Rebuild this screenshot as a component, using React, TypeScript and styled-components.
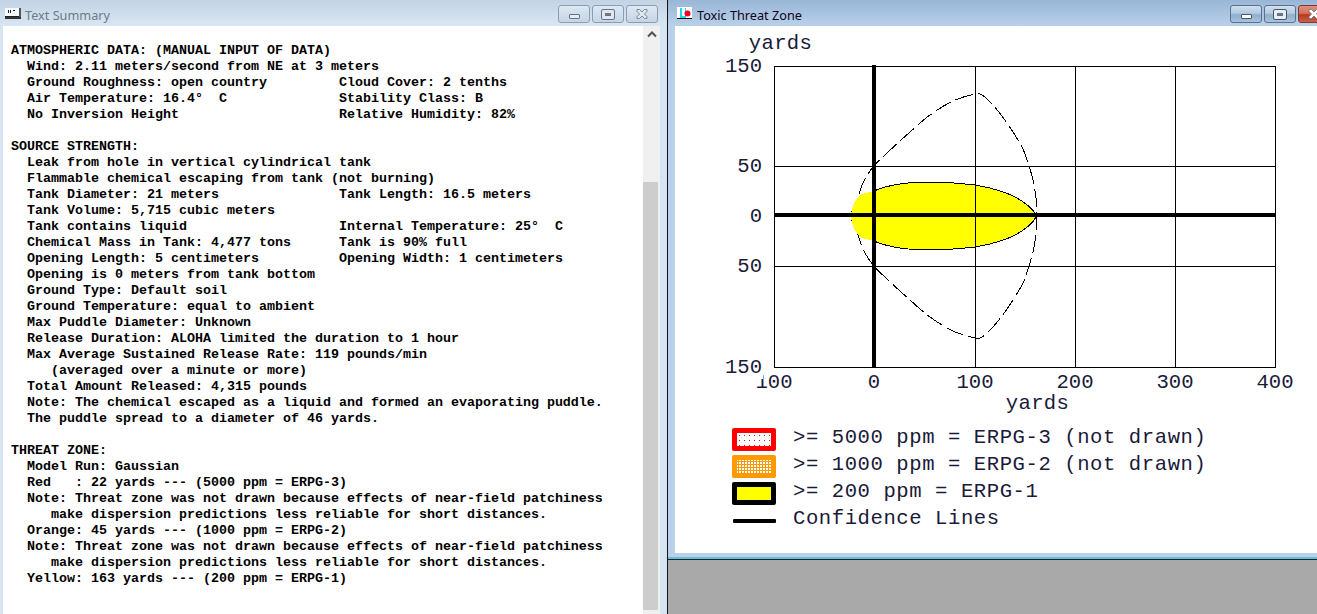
import React from "react";
import styled, { createGlobalStyle } from "styled-components";

const Global = createGlobalStyle`
  html, body { margin: 0; padding: 0; background: #a9a9a9; overflow: hidden; }
  #root { width: 1317px; height: 614px; }
`;

const Desktop = styled.div`
  display: grid;
  grid-template-columns: 668px 649px;
  width: 1317px;
  height: 614px;
  overflow: hidden;
`;

const LeftWindow = styled.section`
  display: flex;
  flex-direction: column;
  height: 614px;
  box-sizing: border-box;
  background: #d7e4f2;
  border-right: 1px solid #111;
  padding: 0 7px 0 3px;
`;

const RightColumn = styled.div`
  display: flex;
  flex-direction: column;
  height: 614px;
  background: #a9a9a9;
`;

const RightWindow = styled.section`
  display: flex;
  flex-direction: column;
  box-sizing: border-box;
  height: 560px;
  background: #b9d1ea;
  border-bottom: 1px solid #222;
  box-shadow: inset 0 -2px 0 #5fc0d8;
  padding: 0 0 6px 7px;
`;

const TitleBar = styled.header<{ $active?: boolean }>`
  display: flex;
  align-items: flex-start;
  flex: none;
  height: 26px;
  margin-left: ${(p) => (p.$active ? "-1px" : "2px")};
  margin-right: ${(p) => (p.$active ? "0" : "-5px")};
  font: 12.7px "Noto Sans", "Open Sans", sans-serif;
  color: ${(p) => (p.$active ? "#10001a" : "#6f7b88")};
`;

const LeftTitleFill = styled.div`
  margin: 0 -7px 0 -3px;
  background: linear-gradient(#c3d3e4, #d9e6f3);
`;

const RightTitleFill = styled.div`
  margin: 0 0 0 -7px;
  padding-left: 7px;
  background: linear-gradient(#98b6d6, #b9d1ea);
`;

const IconSlot = styled.span`
  display: block;
  width: 16px;
  height: 16px;
  margin: 6px 4px 0 3px;
`;

const TitleText = styled.span`
  flex: 1;
  margin-top: 6px;
  line-height: 18px;
  white-space: nowrap;
`;

const Buttons = styled.div<{ $active?: boolean }>`
  display: flex;
  gap: 2px;
  margin-top: 5px;
  margin-right: ${(p) => (p.$active ? "-13px" : "14px")};
  width: 100px;
  flex: none;
`;

const CaptionButton = styled.button<{ $active?: boolean; $close?: boolean }>`
  display: flex;
  align-items: center;
  justify-content: center;
  width: 32px;
  height: 18px;
  padding: 0;
  border: 1px solid ${(p) => (p.$close && p.$active ? "#7d3a30" : p.$active ? "#5d7088" : "#8b9db2")};
  border-radius: 3px;
  background: ${(p) =>
    p.$close && p.$active
      ? "linear-gradient(#e0907f 0%, #d6705c 45%, #b8391f 55%, #c9604a 100%)"
      : p.$active
      ? "linear-gradient(#cfdfee 0%, #b4cbe2 45%, #8fafcd 55%, #a8c3dd 100%)"
      : "linear-gradient(#dce8f3, #c4d5e6)"};
  flex: none;
`;

const MinGlyph = styled.span<{ $active?: boolean }>`
  display: block;
  width: 9px;
  height: 3px;
  margin-top: 4px;
  border: 1px solid ${(p) => (p.$active ? "#4a5568" : "#6b7480")};
  border-radius: 1px;
  background: ${(p) => (p.$active ? "#fff" : "#e3ebf3")};
`;

const MaxGlyph = styled.span<{ $active?: boolean }>`
  display: block;
  width: 6px;
  height: 3px;
  border: 3px solid ${(p) => (p.$active ? "#e8eef5" : "#dfe8f1")};
  outline: 1px solid ${(p) => (p.$active ? "#4a5568" : "#6b7480")};
  background: #6b7480;
  border-radius: 1px;
`;

const LeftBody = styled.div`
  display: flex;
  flex: 1;
  min-height: 0;
  background: #fff;
`;

const Report = styled.pre`
  flex: 1;
  margin: 0;
  padding: 17px 0 0 8px;
  font: bold 13.33px/16px "Liberation Mono", monospace;
  color: #000;
  overflow: hidden;
`;

const Scrollbar = styled.div`
  display: flex;
  flex-direction: column;
  flex: none;
  width: 17px;
  background: #f0f0f0;
`;

const ScrollUp = styled.div`
  display: flex;
  justify-content: center;
  align-items: center;
  height: 17px;
`;

const ScrollGap = styled.div`
  height: 139px;
`;

const ScrollThumb = styled.div`
  height: 428px;
  width: 15px;
  background: #cdcdcd;
`;

const ChartPane = styled.div`
  display: flex;
  flex-direction: column;
  flex: 1;
  min-height: 0;
  background: #fff;
`;

const Chart = styled.svg`
  display: block;
  flex: none;
`;

const Legend = styled.ul`
  display: flex;
  flex-direction: column;
  gap: 4px;
  list-style: none;
  margin: 5px 0 0;
  padding: 0 0 0 57px;
`;

const LegendRow = styled.li`
  display: flex;
  align-items: center;
  gap: 17px;
  height: 23px;
  font: 20.6px/23px "Liberation Mono", monospace;
  letter-spacing: 0.56px;
  color: #1a1a3a;
  white-space: pre;
`;

const LegendLabel = styled.span`
  margin-bottom: 5px;
`;

const Swatch = styled.span<{ $border: string; $fill: string; $dots?: string; $dense?: boolean }>`
  display: block;
  box-sizing: border-box;
  width: 44px;
  height: 23px;
  border: 5px solid ${(p) => p.$border};
  border-radius: 2px;
  background-color: ${(p) => p.$fill};
  ${(p) =>
    p.$dots
      ? p.$dense
        ? `background-image: radial-gradient(circle at 1.5px 1.5px, ${p.$dots} 1.1px, transparent 1.2px); background-size: 3px 3px;`
        : `background-image: linear-gradient(${p.$dots}, ${p.$dots}); background-size: 1px 1px; background-image: radial-gradient(circle at 2.5px 2.5px, ${p.$dots} 0.7px, transparent 0.8px); background-size: 5px 5px;`
      : ""}
`;

const LineSwatch = styled.span`
  display: block;
  width: 43px;
  height: 4px;
  margin-left: 1px;
  background: #000;
  border-radius: 1px;
`;

const REPORT = `ATMOSPHERIC DATA: (MANUAL INPUT OF DATA)
  Wind: 2.11 meters/second from NE at 3 meters
  Ground Roughness: open country         Cloud Cover: 2 tenths
  Air Temperature: 16.4°  C              Stability Class: B
  No Inversion Height                    Relative Humidity: 82%

SOURCE STRENGTH:
  Leak from hole in vertical cylindrical tank
  Flammable chemical escaping from tank (not burning)
  Tank Diameter: 21 meters               Tank Length: 16.5 meters
  Tank Volume: 5,715 cubic meters
  Tank contains liquid                   Internal Temperature: 25°  C
  Chemical Mass in Tank: 4,477 tons      Tank is 90% full
  Opening Length: 5 centimeters          Opening Width: 1 centimeters
  Opening is 0 meters from tank bottom
  Ground Type: Default soil
  Ground Temperature: equal to ambient
  Max Puddle Diameter: Unknown
  Release Duration: ALOHA limited the duration to 1 hour
  Max Average Sustained Release Rate: 119 pounds/min
     (averaged over a minute or more)
  Total Amount Released: 4,315 pounds
  Note: The chemical escaped as a liquid and formed an evaporating puddle.
  The puddle spread to a diameter of 46 yards.

THREAT ZONE:
  Model Run: Gaussian
  Red   : 22 yards --- (5000 ppm = ERPG-3)
  Note: Threat zone was not drawn because effects of near-field patchiness
     make dispersion predictions less reliable for short distances.
  Orange: 45 yards --- (1000 ppm = ERPG-2)
  Note: Threat zone was not drawn because effects of near-field patchiness
     make dispersion predictions less reliable for short distances.
  Yellow: 163 yards --- (200 ppm = ERPG-1)`;

// Chart coordinates are given in page pixels; the svg is offset by the pane origin (675, 26).
const OX = 675;
const OY = 26;
const px = (x: number) => x - OX;
const py = (y: number) => y - OY;

const upper: [number, number][] = [
  [851, 216], [853, 208], [857, 200], [863, 183], [873, 167], [887, 153], [910, 132], [930, 115],
  [953, 101], [975, 94], [982, 95], [993, 105], [1007, 123], [1022, 147], [1028, 163], [1033, 180], [1036, 198], [1037, 216],
];
const lower = upper.map(([x, y]) => [x, 432 - y] as [number, number]).reverse();

function smooth(points: [number, number][]): string {
  let d = `M${px(points[0][0])} ${py(points[0][1])}`;
  for (let i = 0; i < points.length - 1; i++) {
    const p0 = points[Math.max(i - 1, 0)];
    const p1 = points[i];
    const p2 = points[i + 1];
    const p3 = points[Math.min(i + 2, points.length - 1)];
    const c1x = p1[0] + (p2[0] - p0[0]) / 6;
    const c1y = p1[1] + (p2[1] - p0[1]) / 6;
    const c2x = p2[0] - (p3[0] - p1[0]) / 6;
    const c2y = p2[1] - (p3[1] - p1[1]) / 6;
    d += ` C${px(c1x)} ${py(c1y)} ${px(c2x)} ${py(c2y)} ${px(p2[0])} ${py(p2[1])}`;
  }
  return d;
}

const confidence = smooth([...upper, ...lower.slice(1)]);

const plumeTop = `M${px(874)} ${py(191)} C${px(890)} ${py(184)} ${px(910)} ${py(182)} ${px(930)} ${py(182)} C${px(950)} ${py(182)} ${px(965)} ${py(184)} ${px(975)} ${py(185)} C${px(1000)} ${py(189)} ${px(1025)} ${py(197)} ${px(1037)} ${py(216)}`;
const plumeBottom = `M${px(1037)} ${py(216)} C${px(1025)} ${py(235)} ${px(1000)} ${py(243)} ${px(975)} ${py(247)} C${px(965)} ${py(248)} ${px(950)} ${py(250)} ${px(930)} ${py(250)} C${px(910)} ${py(250)} ${px(890)} ${py(248)} ${px(874)} ${py(241)}`;
const plumeLeft = `L${px(862)} ${py(238)} C${px(855)} ${py(233)} ${px(851)} ${py(224)} ${px(851)} ${py(216)} C${px(851)} ${py(208)} ${px(855)} ${py(199)} ${px(862)} ${py(194)} L${px(874)} ${py(191)}`;

const GRID_X = [774, 975, 1075, 1175, 1275];
const GRID_Y = [66, 166, 266, 367];
const LABEL = { fontFamily: '"Liberation Mono", monospace', fontSize: 20.6, fill: "#1a1a3a" };

const TextIcon = () => (
  <svg width="16" height="16" viewBox="0 0 16 16">
    <rect x="0" y="2" width="14" height="9" fill="#f6f9fc" />
    <rect x="0" y="10" width="14" height="1" fill="#222" />
    <rect x="14" y="2" width="2" height="11" fill="#555" />
    <rect x="0" y="11" width="16" height="2" fill="#333" />
    <rect x="3" y="4" width="1" height="3" fill="#222" />
    <rect x="5" y="4" width="1" height="3" fill="#222" />
    <rect x="8" y="4" width="2" height="1" fill="#222" />
  </svg>
);

const ThreatIcon = () => (
  <svg width="16" height="16" viewBox="0 0 16 16">
    <rect x="0" y="1" width="15" height="11" fill="#fff" />
    <rect x="3" y="2" width="2" height="10" fill="#19d5ee" />
    <rect x="8" y="2" width="1" height="10" fill="#19d5ee" />
    <rect x="3" y="10" width="6" height="2" fill="#19d5ee" />
    <circle cx="10.5" cy="7.500" r="3" fill="#f00028" />
    <rect x="0" y="12" width="15" height="1" fill="#111" />
  </svg>
);

const CloseIcon = ({ color }: { color: string }) => (
  <svg width="12" height="10" viewBox="0 0 12 10">
    <path d="M1 0.5h2.5L6 3l2.500-2.500H11v1.800L8.500 5 11 7.700v1.800H8.500L6 7 3.500 9.500H1V7.700L3.500 5 1 2.300z" fill={color} stroke="#6b7480" strokeWidth="0.8" />
  </svg>
);

function WindowButtons({ active }: { active?: boolean }) {
  return (
    <Buttons $active={active}>
      <CaptionButton $active={active} aria-label="Minimize"><MinGlyph $active={active} /></CaptionButton>
      <CaptionButton $active={active} aria-label="Maximize"><MaxGlyph $active={active} /></CaptionButton>
      <CaptionButton $active={active} $close aria-label="Close"><CloseIcon color={active ? "#fff" : "#dfe6ee"} /></CaptionButton>
    </Buttons>
  );
}

export default function App() {
  return (
    <Desktop>
      <Global />
      <LeftWindow>
        <LeftTitleFill>
          <TitleBar>
            <IconSlot><TextIcon /></IconSlot>
            <TitleText>Text Summary</TitleText>
            <WindowButtons />
          </TitleBar>
        </LeftTitleFill>
        <LeftBody>
          <Report>{REPORT}</Report>
          <Scrollbar>
            <ScrollUp>
              <svg width="10" height="7" viewBox="0 0 10 7">
                <path d="M1 5.500 5 1.500l4 4" fill="none" stroke="#505050" strokeWidth="2" />
              </svg>
            </ScrollUp>
            <ScrollGap />
            <ScrollThumb />
          </Scrollbar>
        </LeftBody>
      </LeftWindow>
      <RightColumn>
        <RightWindow>
          <RightTitleFill>
            <TitleBar $active>
              <IconSlot><ThreatIcon /></IconSlot>
              <TitleText>Toxic Threat Zone</TitleText>
              <WindowButtons active />
            </TitleBar>
          </RightTitleFill>
          <ChartPane>
            <Chart width="642" height="397" viewBox="0 0 642 397">
              <g shapeRendering="crispEdges">
                <rect x={px(774) + 0.5} y={py(66) + 0.5} width={501} height={301} fill="#fff" stroke="#000" />
              </g>
              <path d={confidence} fill="none" stroke="#000" strokeWidth="1" strokeDasharray="18 5" shapeRendering="crispEdges" />
              <path d={`${plumeTop} ${plumeBottom.replace(/^M\S+ \S+/, "")} ${plumeLeft} Z`} fill="#ffff00" shapeRendering="crispEdges" />
              <g fill="none" stroke="#000" strokeWidth="1" shapeRendering="crispEdges">
                <path d={plumeTop} />
                <path d={plumeBottom} />
              </g>
              <g shapeRendering="crispEdges" stroke="#000">
                {GRID_X.slice(1, 4).map((x) => (
                  <line key={x} x1={px(x) + 0.5} x2={px(x) + 0.5} y1={py(66)} y2={py(367)} />
                ))}
                {GRID_Y.slice(1, 3).map((y) => (
                  <line key={y} x1={px(774)} x2={px(1275)} y1={py(y) + 0.5} y2={py(y) + 0.5} />
                ))}
                <line x1={px(874)} x2={px(874)} y1={py(65)} y2={py(367)} strokeWidth="4" />
                <line x1={px(774)} x2={px(1276)} y1={py(215)} y2={py(215)} strokeWidth="4" />
              </g>
              <g {...LABEL} textAnchor="middle">
                <text x={px(774)} y={py(388)}>100</text>
                <text x={px(874)} y={py(388)}>0</text>
                <text x={px(975)} y={py(388)}>100</text>
                <text x={px(1075)} y={py(388)}>200</text>
                <text x={px(1175)} y={py(388)}>300</text>
                <text x={px(1275)} y={py(388)}>400</text>
                <text x={px(1037.5)} y={py(409)} letterSpacing="0.3">yards</text>
                <text x={px(780.5)} y={py(49)} letterSpacing="0.3">yards</text>
              </g>
              <rect x={px(722)} y={py(358)} width={41} height={21} fill="#fff" />
              <g {...LABEL} textAnchor="end">
                <text x={px(762)} y={py(72)}>150</text>
                <text x={px(762)} y={py(172)}>50</text>
                <text x={px(762)} y={py(222)}>0</text>
                <text x={px(762)} y={py(272)}>50</text>
                <text x={px(762)} y={py(373)}>150</text>
              </g>
            </Chart>
            <Legend>
              <LegendRow><Swatch $border="#ff0000" $fill="#fff" $dots="#ff0000" /><LegendLabel>{">= 5000 ppm = ERPG-3 (not drawn)"}</LegendLabel></LegendRow>
              <LegendRow><Swatch $border="#ff9900" $fill="#fff" $dots="#ff9900" $dense /><LegendLabel>{">= 1000 ppm = ERPG-2 (not drawn)"}</LegendLabel></LegendRow>
              <LegendRow><Swatch $border="#000" $fill="#ffff00" /><LegendLabel>{">= 200 ppm = ERPG-1"}</LegendLabel></LegendRow>
              <LegendRow><LineSwatch /><LegendLabel>Confidence Lines</LegendLabel></LegendRow>
            </Legend>
          </ChartPane>
        </RightWindow>
      </RightColumn>
    </Desktop>
  );
}
